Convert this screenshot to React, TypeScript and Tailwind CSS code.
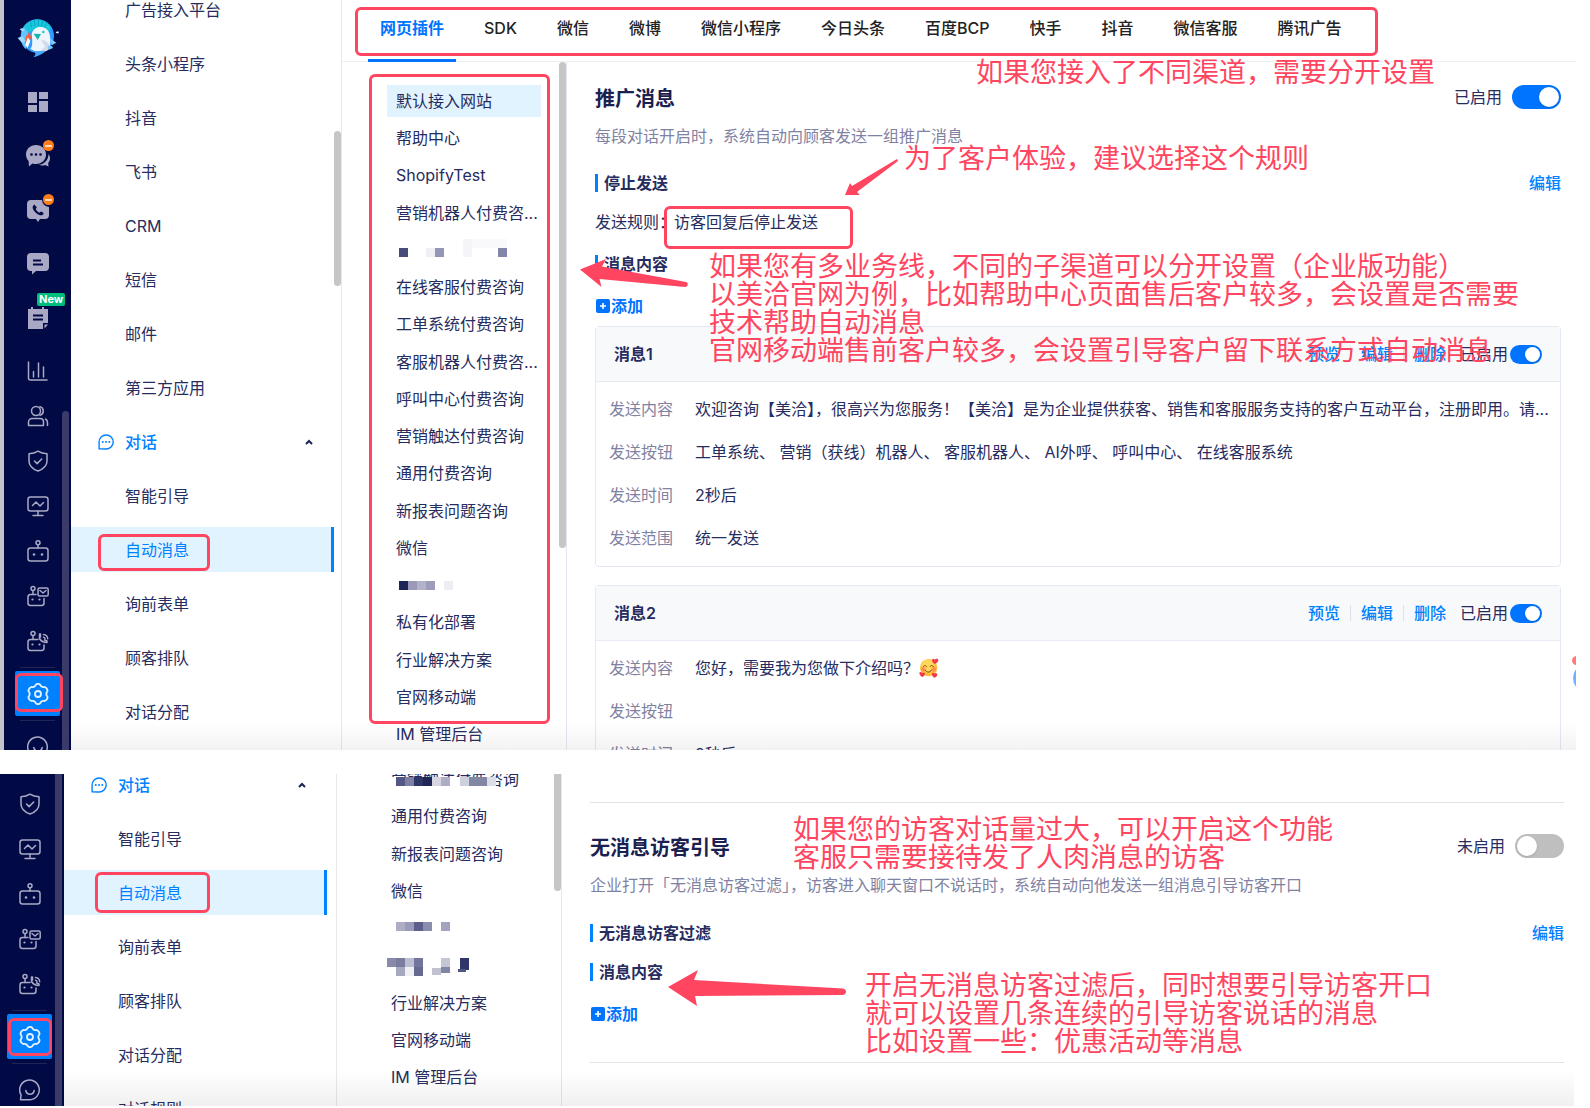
import type { ReactNode } from 'react';
import clsx from 'clsx';

type MenuItem = { label: string; active?: boolean; group?: boolean };
type Pixel = [x: number, y: number, w: number, h: number, fill: string];
type Channel = { label?: string; active?: boolean; mask?: Pixel[] };

const topMenu: MenuItem[] = [
  { label: '广告接入平台' },
  { label: '头条小程序' },
  { label: '抖音' },
  { label: '飞书' },
  { label: 'CRM' },
  { label: '短信' },
  { label: '邮件' },
  { label: '第三方应用' },
  { label: '对话', group: true },
  { label: '智能引导' },
  { label: '自动消息', active: true },
  { label: '询前表单' },
  { label: '顾客排队' },
  { label: '对话分配' },
];

const bottomMenu: MenuItem[] = [
  { label: '对话', group: true },
  { label: '智能引导' },
  { label: '自动消息', active: true },
  { label: '询前表单' },
  { label: '顾客排队' },
  { label: '对话分配' },
  { label: '对话规则' },
];

const tabs = [
  '网页插件',
  'SDK',
  '微信',
  '微博',
  '微信小程序',
  '今日头条',
  '百度BCP',
  '快手',
  '抖音',
  '微信客服',
  '腾讯广告',
];

const topChannels: Channel[] = [
  { label: '默认接入网站', active: true },
  { label: '帮助中心' },
  { label: 'ShopifyTest' },
  { label: '营销机器人付费咨...' },
  {
    mask: [
      [3, 7, 9, 9, '#474c7a'],
      [30, 7, 9, 9, '#efeff4'],
      [39, 7, 9, 9, '#9496b5'],
      [67, -2, 9, 18, '#f5f5f9'],
      [76, -2, 35, 9, '#f9f9fb'],
      [102, 7, 9, 9, '#8486a9'],
    ],
  },
  { label: '在线客服付费咨询' },
  { label: '工单系统付费咨询' },
  { label: '客服机器人付费咨...' },
  { label: '呼叫中心付费咨询' },
  { label: '营销触达付费咨询' },
  { label: '通用付费咨询' },
  { label: '新报表问题咨询' },
  { label: '微信' },
  {
    mask: [
      [3, 5, 9, 9, '#1e2455'],
      [12, 5, 9, 9, '#9a99b8'],
      [21, 5, 9, 9, '#b2b2c8'],
      [30, 5, 9, 9, '#9d9cbb'],
      [48, 5, 9, 9, '#ededf2'],
    ],
  },
  { label: '私有化部署' },
  { label: '行业解决方案' },
  { label: '官网移动端' },
  { label: 'IM 管理后台' },
];

const bottomChannels: Channel[] = [
  {
    label: '营销触达付费咨询',
    mask: [
      [-2, 7, 107, 11, '#ffffff'],
      [5, 7, 9, 9, '#525786'],
      [14, 7, 9, 9, '#7d80a3'],
      [23, 7, 9, 9, '#2f3668'],
      [32, 7, 9, 9, '#1f2656'],
      [41, 7, 9, 9, '#d5d6e0'],
      [50, 7, 9, 9, '#adaec6'],
      [69, 7, 9, 9, '#cfd0dd'],
      [78, 7, 18, 9, '#8287a3'],
      [96, 7, 9, 9, '#dcdde7'],
    ],
  },
  { label: '通用付费咨询' },
  { label: '新报表问题咨询' },
  { label: '微信' },
  {
    mask: [
      [5, 3, 9, 9, '#adaec5'],
      [14, 3, 9, 9, '#9a9bb8'],
      [23, 3, 9, 9, '#5b5f89'],
      [32, 3, 9, 9, '#8a8eae'],
      [50, 3, 9, 9, '#a2a3bd'],
    ],
  },
  {
    mask: [
      [-4, 2, 9, 9, '#878aa8'],
      [5, 2, 9, 9, '#7a7d9f'],
      [5, 11, 9, 9, '#a6a8bf'],
      [14, 2, 9, 9, '#bcbdd0'],
      [14, 11, 9, 9, '#f0f0f4'],
      [23, 2, 9, 9, '#73769a'],
      [23, 11, 9, 9, '#666a92'],
      [50, 2, 9, 9, '#c4c6d4'],
      [41, 12, 9, 7, '#bfc1d0'],
      [50, 11, 9, 6, '#8084a5'],
      [69, 2, 9, 12, '#303768'],
      [67, 13, 8, 3, '#50567f'],
    ],
  },
  { label: '行业解决方案' },
  { label: '官网移动端' },
  { label: 'IM 管理后台' },
];

const strokeProps = {
  fill: 'none',
  stroke: 'currentColor',
  strokeWidth: 1.5,
  strokeLinecap: 'round' as const,
  strokeLinejoin: 'round' as const,
};

function Icon({ children, size = 22 }: { children: ReactNode; size?: number }) {
  return (
    <svg width={size} height={size} viewBox="0 0 22 22" aria-hidden="true" {...strokeProps}>
      {children}
    </svg>
  );
}

function Logo() {
  return (
    <svg width="42" height="40" viewBox="0 0 126 120" aria-hidden="true">
      <circle cx="61" cy="54" r="50" fill="#2f9bff" />
      <path d="M20 26a50 50 0 0 1 82 0l-8 18-40-12-30 20z" fill="#17c9dc" />
      <path d="M40 10l4 18M52 5l2 20M65 4l-1 20M78 7l-5 18M90 13l-9 16" stroke="#0aa3c4" strokeWidth="3" />
      <path d="M12 60c0-18 4-26 10-32l12 18-8 48C18 86 12 74 12 60z" fill="#63c4ff" />
      <path
        d="M44 48c4-18 20-24 34-20 16 4 22 20 22 38 0 18-2 30-14 34-18 6-36 0-46-8 8-6 6-26 4-44z"
        fill="#eef5fc"
      />
      <path d="M72 66c12 0 24 8 26 20-4 10-16 16-28 14l14-14z" fill="#d3dcea" />
      <path d="M50 47l22 1-10 18z" fill="#12b8b0" />
      <circle cx="79" cy="42" r="4" fill="#35c6c0" />
      <path d="M38 40l4 20-10 18-8-4 2-16z" fill="#ff5a36" />
      <path d="M32 58l8 10-8 22-7-8z" fill="#fff" />
      <path d="M2 60l14-6 10 16-10 6zM8 34c4-4 12-4 14 0l-4 8z" fill="#9adcff" />
      <path d="M98 60l20 14-14 8zM92 84c8-4 14 0 16 6l-14 6z" fill="#7cc9ff" />
      <path d="M116 42l8-2 2 6h-8z" fill="#c5ecff" />
      <path d="M50 100l34-2c-4 10-18 14-34 20 6-8 8-12 0-18z" fill="#49a8ff" />
    </svg>
  );
}

const GridIcon = () => (
  <Icon>
    <path
      d="M1 1h9v11H1zM12 1h9v7h-9zM1 14h9v7H1zM12 10h9v11h-9z"
      fill="currentColor"
      stroke="none"
    />
  </Icon>
);

const ChatsIcon = () => (
  <svg width="26" height="24" viewBox="0 0 26 24" aria-hidden="true">
    <path
      d="M11 1c6 0 10 4.300 10 9.500S17 20 11 20c-1.500 0-2.600-.2-3.600-.6L4 22.500 3.600 17C2 15.400 1 13 1 10.500 1 5.300 5 1 11 1z"
      fill="currentColor"
    />
    <path d="M23.500 10c2.400 3.400 1.800 6.500-.3 9l.3 3.600-3.400-1.600c-2.300.9-4.700.6-6.300-.2 6-.6 9.700-5.300 9.700-10.800z" fill="currentColor" />
    <g fill="#020a45">
      <circle cx="6.500" cy="10.500" r="1.300" />
      <circle cx="11" cy="10.500" r="1.300" />
      <circle cx="15.500" cy="10.500" r="1.300" />
    </g>
  </svg>
);

const PhoneChatIcon = () => (
  <svg width="24" height="24" viewBox="0 0 24 24" aria-hidden="true">
    <path d="M5 2h11a8 8 0 0 0 7 7v8a4 4 0 0 1-4 4h-5l-2 3-2-3H5a4 4 0 0 1-4-4V6a4 4 0 0 1 4-4z" fill="currentColor" />
    <path
      d="M8.500 6.500c-2 1-2.500 3-1 5.500s4 4.500 6.500 5.200c2 .4 3.300-.4 3.700-2.200l-2.700-1.500-1.700 1.200c-1.500-.7-2.800-2-3.600-3.700l1.100-1.600z"
      fill="#020a45"
    />
  </svg>
);

const MessageIcon = () => (
  <svg width="24" height="24" viewBox="0 0 24 24" aria-hidden="true">
    <path d="M5 1h14a4 4 0 0 1 4 4v10a4 4 0 0 1-4 4h-9l-4 3.500V19H5a4 4 0 0 1-4-4V5a4 4 0 0 1 4-4z" fill="currentColor" />
    <path d="M7 8.500h8M7 12.500h10" stroke="#020a45" strokeWidth="1.800" />
  </svg>
);

const NoteIcon = () => (
  <svg width="22" height="24" viewBox="0 0 22 24" aria-hidden="true">
    <path d="M1 3h3V1h2v2h9V1h2v2h4v14h-5v6H1z" fill="currentColor" />
    <path d="M17.500 18.500H21l-3.500 4z" fill="currentColor" />
    <path d="M6 9.500h10M6 13.500h10" stroke="#020a45" strokeWidth="1.800" />
  </svg>
);

const ChartIcon = () => (
  <Icon>
    <path d="M1.500 2v16c0 1.500.6 2 2 2H20M6.500 11.500V17M11.500 3v14M16.500 7v10" />
  </Icon>
);

const UsersIcon = () => (
  <Icon>
    <circle cx="9" cy="6" r="4.500" />
    <path d="M13 1.600a4.600 4.600 0 0 1 0 8.800M1.500 20.500V17c0-2 1.600-3.500 3.500-3.500h8c2 0 3.500 1.500 3.500 3.500v3.500zM18.500 14c1.400.8 2 2 2 3.500v3" />
  </Icon>
);

const ShieldIcon = () => (
  <Icon>
    <path d="M11 1.200c2.600 1.700 5.500 2.500 9 2.600V11c0 4.800-3.500 8-9 10-5.500-2-9-5.200-9-10V3.800c3.500-.1 6.400-.9 9-2.600z" />
    <path d="M7.500 11l2.600 2.600L14.700 9" />
  </Icon>
);

const MonitorIcon = () => (
  <Icon>
    <rect x="1" y="2" width="20" height="14" rx="2.500" />
    <path d="M5.500 10.500L9 7l4 4 3.500-3.500M11 16v4M6 20.500h10" />
  </Icon>
);

const RobotIcon = () => (
  <Icon>
    <rect x="1" y="8" width="20" height="13" rx="2.500" />
    <circle cx="11" cy="2.800" r="2" />
    <path d="M11 5v3" />
    <g fill="currentColor" stroke="none">
      <circle cx="7" cy="14.500" r="1.300" />
      <circle cx="15" cy="14.500" r="1.300" />
    </g>
  </Icon>
);

const RobotMailIcon = () => (
  <Icon>
    <path d="M9 9.500H3.500C2 9.500 1 10.300 1 12v6c0 1.700 1 2.500 2.500 2.500h11c1.500 0 2.500-.8 2.500-2.500v-4.500" />
    <circle cx="6" cy="3.500" r="2" />
    <path d="M6 5.500v4" />
    <rect x="11" y="3" width="10.200" height="8" rx="1.500" />
    <path d="M13 5.500l3 2.500 3-2.500" />
    <g fill="currentColor" stroke="none">
      <circle cx="5.500" cy="14.500" r="1.100" />
      <circle cx="12.500" cy="14.500" r="1.100" />
    </g>
  </Icon>
);

const RobotCallIcon = () => (
  <Icon>
    <path d="M11 9.500H3.500C2 9.500 1 10.300 1 12v6c0 1.700 1 2.500 2.500 2.500h11c1.500 0 2.500-.8 2.500-2.500v-3" />
    <circle cx="6" cy="3.500" r="2" />
    <path d="M6 5.500v4" />
    <path d="M12.500 4v4.500c1.500 2.500 4 4 7.500 4v-1.500l-2.500-1M12.500 4h1v3M16.500 4.500c2.500.2 4 1.700 4.200 4.200M16.500 7.200c.9.1 1.400.6 1.500 1.500" />
    <g fill="currentColor" stroke="none">
      <circle cx="5.500" cy="14.500" r="1.100" />
      <circle cx="12.500" cy="14.500" r="1.100" />
    </g>
  </Icon>
);

const GearIcon = () => (
  <Icon>
    <path
      d="M8.800 1.800Q11 0 13.200 1.800Q14.300 4.700 17.600 4Q20.400 5 20.600 8Q18 11 20.600 14Q20.400 17 17.600 18Q14.300 17.300 13.200 20.200Q11 22 8.800 20.200Q7.700 17.300 4.400 18Q1.600 17 1.400 14Q4 11 1.400 8Q1.600 5 4.400 4Q7.700 4.700 8.800 1.800z"
      strokeWidth="1.800"
    />
    <circle cx="11" cy="11" r="3" strokeWidth="1.800" />
  </Icon>
);

const SmileIcon = () => (
  <Icon>
    <path d="M1.500 20.500l.6-4.500A9.800 9.800 0 1 1 11 20.700H1.500z" />
    <path d="M6.800 11.500c1 5 7.400 5 8.400 0" />
  </Icon>
);

function NavItem({ label, active, children }: { label: string; active?: boolean; children: ReactNode }) {
  return (
    <a
      href="#"
      aria-label={label}
      className={clsx(
        'flex h-[45px] shrink-0 items-center justify-center rounded-xs',
        active ? 'bg-[#0081ff] text-[#e4f1ff]' : 'text-[#a9a9c5]'
      )}
    >
      {children}
    </a>
  );
}

function TopNavItem({ label, badge, children }: { label: string; badge?: ReactNode; children: ReactNode }) {
  return (
    <a
      href="#"
      aria-label={label}
      className="relative flex h-[54px] shrink-0 items-center justify-center text-[#a9a9c5]"
    >
      {children}
      {badge}
    </a>
  );
}

function BusyBadge() {
  return (
    <span className="absolute top-[11px] left-7 flex size-[11px] items-center justify-center rounded-full bg-[#ff7d1a]">
      <span className="h-[2px] w-[7px] bg-[#ffd9bd]" />
    </span>
  );
}

function NavDivider() {
  return (
    <div className="flex h-2 shrink-0 items-center px-[5px]">
      <div className="h-px w-full bg-[#1f2657]" />
    </div>
  );
}

// lower part of the icon rail, the same on both panels
function NavTail() {
  return (
    <>
      <NavItem label="质检">
        <ShieldIcon />
      </NavItem>
      <NavItem label="监控">
        <MonitorIcon />
      </NavItem>
      <NavItem label="机器人">
        <RobotIcon />
      </NavItem>
      <NavItem label="营销机器人">
        <RobotMailIcon />
      </NavItem>
      <NavItem label="外呼机器人">
        <RobotCallIcon />
      </NavItem>
      <NavDivider />
      <NavItem label="设置" active>
        <GearIcon />
      </NavItem>
      <NavDivider />
      <NavItem label="反馈">
        <SmileIcon />
      </NavItem>
    </>
  );
}

function SideMenu({
  items,
  className,
  listClassName,
  thumb,
}: {
  items: MenuItem[];
  className: string;
  listClassName?: string;
  thumb?: ReactNode;
}) {
  return (
    <aside className={clsx('flex shrink-0 border-r border-[#e8e8ec]', className)}>
      <ul className={clsx('flex w-[263px] shrink-0 flex-col gap-[9px]', listClassName)}>
        {items.map((item) => (
          <li key={item.label}>
            <a
              href="#"
              className={clsx(
                'flex h-[45px] items-center',
                item.group ? 'gap-[11px] pr-[21px] pl-[27px] font-medium text-[#0081ff]' : 'pl-[54px]',
                item.active && 'border-r-[3px] border-[#0081ff] bg-[#e1f3ff] text-[#0081ff]'
              )}
            >
              {item.group && (
                <Icon size={16}>
                  <path d="M1.500 20.500V11A9.700 9.700 0 1 1 11 20.700z" strokeWidth="1.900" />
                  <path d="M6.500 11h.1M11 11h.1M15.500 11h.1" strokeWidth="2.600" />
                </Icon>
              )}
              {item.label}
              {item.group && (
                <svg width="8" height="6" viewBox="0 0 8 6" className="ml-auto text-[#1c2452]" aria-hidden="true">
                  <path d="M1 5l3-3 3 3" fill="none" stroke="currentColor" strokeWidth="2" />
                </svg>
              )}
            </a>
          </li>
        ))}
      </ul>
      {thumb}
    </aside>
  );
}

function Mosaic({ pixels, overlay }: { pixels: Pixel[]; overlay?: boolean }) {
  return (
    <svg
      width="136"
      height="18"
      viewBox="0 0 136 18"
      className={clsx('overflow-visible', overlay && 'absolute top-[7px] left-[9px]')}
      aria-hidden="true"
    >
      {pixels.map(([x, y, w, h, fill]) => (
        <rect key={`${x}-${y}`} x={x} y={y} width={w} height={h} fill={fill} />
      ))}
    </svg>
  );
}

function ChannelList({ items, className, thumb }: { items: Channel[]; className?: string; thumb: ReactNode }) {
  return (
    <div className="flex w-[225px] shrink-0 justify-between border-r border-[#e3e8f0] pl-[45px]">
      <ul className={clsx('flex w-[154px] flex-col justify-between', className)}>
        {items.map((item, i) => (
          <li key={i}>
            <a
              href="#"
              className={clsx(
                'relative flex h-8 items-center px-[9px] whitespace-nowrap',
                item.active && 'bg-[#e1f3ff]'
              )}
            >
              {item.label}
              {item.mask && <Mosaic pixels={item.mask} overlay={!!item.label} />}
            </a>
          </li>
        ))}
      </ul>
      {thumb}
    </div>
  );
}

function Switch({ label, on, small }: { label: string; on?: boolean; small?: boolean }) {
  return (
    <label className={clsx('flex items-center', small ? 'gap-[2px]' : 'gap-[10px]')}>
      {label}
      <input
        type="checkbox"
        role="switch"
        defaultChecked={on}
        className={clsx(
          'flex shrink-0 appearance-none items-center rounded-full bg-[#bfbfbf] px-[2px] before:rounded-full before:bg-white before:shadow checked:justify-end checked:bg-[#0073ff]',
          small ? 'h-[19px] w-8 before:size-[15px]' : 'h-6 w-[49px] before:size-5'
        )}
      />
    </label>
  );
}

function TitleRow({ title, label, on }: { title: string; label: string; on?: boolean }) {
  return (
    <div className="flex h-6 items-start justify-between">
      <h2 className="text-xl font-semibold text-[#1a2150]">{title}</h2>
      <Switch label={label} on={on} />
    </div>
  );
}

function SectionHeader({ title, editable, className }: { title: string; editable?: boolean; className?: string }) {
  return (
    <div className={clsx('flex items-center justify-between', className)}>
      <h3 className="flex items-center gap-[6px] font-semibold">
        <span className="h-[18px] w-[3px] bg-[#0081ff]" />
        {title}
      </h3>
      {editable && (
        <a href="#" className="font-medium text-[#0081ff]">
          编辑
        </a>
      )}
    </div>
  );
}

function AddButton({ className }: { className?: string }) {
  return (
    <button type="button" className={clsx('flex items-center gap-px pl-px font-semibold text-[#0073ff]', className)}>
      <svg width="14" height="14" viewBox="0 0 14 14" aria-hidden="true">
        <rect width="14" height="14" rx="2" fill="currentColor" />
        <path d="M7 4v6M4 7h6" stroke="#fff" strokeWidth="1.600" />
      </svg>
      添加
    </button>
  );
}

function LoveEmoji() {
  return (
    <svg width="20" height="20" viewBox="0 0 60 60" role="img" aria-label="🥰" className="inline-block">
      <circle cx="29" cy="29" r="26" fill="#fdc03a" />
      <circle cx="27" cy="24" r="19" fill="#ffd75a" />
      <circle cx="13" cy="34" r="7" fill="#ff8f4a" />
      <circle cx="44" cy="34" r="7" fill="#ff8f4a" />
      <path d="M13 26c3-5 8-5 10 0M33 26c3-5 8-5 10 0M19 37c4 7 14 7 18 0" fill="none" stroke="#7a4410" strokeWidth="3" strokeLinecap="round" />
      <path d="M47 18c-9-6-10-15-4-16 3 0 4 2 4 4 2-3 5-5 9-3 5 4 0 12-9 15z" fill="#f2394b" />
      <path d="M9 57C0 51-1 43 4 42c3 0 4 2 5 4 1-3 5-4 8-1 3 4-1 9-8 12z" fill="#f2394b" />
      <path d="M46 59c-8-6-9-14-4-15 3 0 4 2 4 4 2-3 5-4 8-1 3 4-1 9-8 12z" fill="#f2394b" />
    </svg>
  );
}

function MessageCard({
  title,
  rows,
  className,
}: {
  title: string;
  rows: { label: string; value?: ReactNode }[];
  className?: string;
}) {
  return (
    <section className={clsx('rounded-sm border border-[#e3e8f3] bg-white', className)}>
      <header className="flex h-[55px] items-center justify-between border-b border-[#e8ebf5] bg-[#f8f9fb] pr-[18px] pl-[18px]">
        <h4 className="font-semibold">{title}</h4>
        <div className="flex items-center">
          <div className="flex items-center gap-[10px] pr-[14px] font-medium text-[#0081ff]">
            <a href="#">预览</a>
            <span className="h-4 w-px bg-[#dfe2ec]" />
            <a href="#">编辑</a>
            <span className="h-4 w-px bg-[#dfe2ec]" />
            <a href="#">删除</a>
          </div>
          <Switch label="已启用" on small />
        </div>
      </header>
      <dl className="flex flex-col gap-[19px] px-[13px] pt-[15px] pb-4">
        {rows.map((row) => (
          <div key={row.label} className="flex h-6">
            <dt className="w-[86px] shrink-0 text-[#7f82a2]">{row.label}</dt>
            <dd className="flex items-center whitespace-nowrap">{row.value}</dd>
          </div>
        ))}
      </dl>
    </section>
  );
}

// red hand-drawn frame laid over the screen
function Mark({ className }: { className: string }) {
  return <div className={clsx('pointer-events-none absolute rounded-md border-[3px] border-[#ff4560]', className)} />;
}

function Note({ className, children }: { className: string; children: ReactNode }) {
  return (
    <p
      className={clsx(
        'pointer-events-none absolute text-[27px] leading-7 font-normal whitespace-nowrap text-[#ff4560]',
        className
      )}
    >
      {children}
    </p>
  );
}

function TopPanel() {
  return (
    <div className="relative mr-[14px] flex min-h-0 overflow-hidden">
      <nav className="flex w-[71px] shrink-0 justify-between border-l-[4px] border-[#c4c4c8] bg-[#020a45] pr-[2px] pl-[11px]">
        <div className="flex w-[45px] flex-col">
          <a href="#" aria-label="美洽" className="flex h-[75px] shrink-0 items-center justify-center">
            <Logo />
          </a>
          <TopNavItem label="工作台">
            <GridIcon />
          </TopNavItem>
          <TopNavItem label="在线对话" badge={<BusyBadge />}>
            <ChatsIcon />
          </TopNavItem>
          <TopNavItem label="通话" badge={<BusyBadge />}>
            <PhoneChatIcon />
          </TopNavItem>
          <TopNavItem label="留言">
            <MessageIcon />
          </TopNavItem>
          <TopNavItem
            label="工单"
            badge={
              <span className="absolute top-[2px] left-[22px] rounded-xs bg-[#00bd7e] px-[2px] text-[11px] leading-[13px] font-bold text-white">
                New
              </span>
            }
          >
            <NoteIcon />
          </TopNavItem>
          <div className="mt-[3px] flex flex-col">
            <NavItem label="报表">
              <ChartIcon />
            </NavItem>
            <NavItem label="顾客">
              <UsersIcon />
            </NavItem>
            <NavTail />
          </div>
        </div>
        <div className="mt-[411px] w-[7px] rounded-t-full bg-[#3a3b6b]" />
      </nav>

      <SideMenu
        items={topMenu}
        className="w-[271px]"
        listClassName="-mt-[13px]"
        thumb={<div className="mt-[131px] h-[155px] w-[7px] shrink-0 rounded-full bg-[#c6c6c6]" />}
      />

      <div className="flex min-w-0 flex-1 flex-col">
        <div role="tablist" className="flex h-[62px] shrink-0 gap-4 border-b border-[#eeeff3] pl-[26px]">
          {tabs.map((tab, i) => (
            <button
              key={tab}
              type="button"
              role="tab"
              aria-selected={i === 0}
              className={clsx(
                'h-[62px] shrink-0 border-b-[3px] px-3 pb-1',
                i === 0
                  ? 'border-[#0073ff] font-bold text-[#0073ff]'
                  : 'border-transparent font-medium text-[#222]'
              )}
            >
              {tab}
            </button>
          ))}
        </div>

        <div className="flex min-h-0 flex-1">
          <ChannelList
            items={topChannels}
            className="pt-[23px]"
            thumb={<div className="h-[486px] w-[7px] rounded-full bg-[#c6c6c6]" />}
          />
          <main className="min-w-0 flex-1 pt-[23px] pr-[15px] pl-7">
            <TitleRow title="推广消息" label="已启用" on />
            <p className="mt-[15px] text-[#7f82a2]">每段对话开启时，系统自动向顾客发送一组推广消息</p>
            <SectionHeader title="停止发送" editable className="mt-[23px]" />
            <p className="mt-[15px] flex">
              <span className="w-[79px] whitespace-nowrap">发送规则：</span>
              <span>访客回复后停止发送</span>
            </p>
            <SectionHeader title="消息内容" className="mt-[18px]" />
            <AddButton className="mt-[18px]" />
            <MessageCard
              title="消息1"
              className="mt-2"
              rows={[
                {
                  label: '发送内容',
                  value:
                    '欢迎咨询【美洽】，很高兴为您服务！【美洽】是为企业提供获客、销售和客服服务支持的客户互动平台，注册即用。请...',
                },
                {
                  label: '发送按钮',
                  value: '工单系统、 营销（获线）机器人、 客服机器人、 AI外呼、 呼叫中心、 在线客服系统',
                },
                { label: '发送时间', value: '2秒后' },
                { label: '发送范围', value: '统一发送' },
              ]}
            />
            <MessageCard
              title="消息2"
              className="mt-[18px]"
              rows={[
                {
                  label: '发送内容',
                  value: (
                    <>
                      您好，需要我为您做下介绍吗？
                      <LoveEmoji />
                    </>
                  ),
                },
                { label: '发送按钮' },
                { label: '发送时间', value: '2秒后' },
              ]}
            />
          </main>
        </div>
      </div>

      {/* floating chat widget, cut off by the window edge */}
      <div className="absolute top-[656px] -right-[5px] size-[9px] rounded-full bg-[#ff7b7b]" />
      <div className="absolute top-[664px] -right-[25px] size-[28px] rounded-full bg-[#6db3ff]" />

      <div className="pointer-events-none absolute right-0 bottom-0 left-[71px] h-7 bg-linear-to-t from-black/5 to-transparent" />

      <Mark className="top-[7px] left-[355px] h-[49px] w-[1023px]" />
      <Mark className="top-[74px] left-[369px] h-[650px] w-[181px]" />
      <Mark className="top-[206px] left-[664px] h-[43px] w-[189px]" />
      <Mark className="top-[534px] left-[98px] h-[37px] w-[112px]" />
      <Mark className="top-[673px] left-[15px] h-[39px] w-[48px]" />

      <Note className="top-[59px] left-[976px]">如果您接入了不同渠道，需要分开设置</Note>
      <Note className="top-[145px] left-[904px]">为了客户体验，建议选择这个规则</Note>
      <Note className="top-[253px] left-[709px]">
        如果您有多业务线，不同的子渠道可以分开设置（企业版功能）
        <br />
        以美洽官网为例，比如帮助中心页面售后客户较多，会设置是否需要
        <br />
        技术帮助自动消息
        <br />
        官网移动端售前客户较多，会设置引导客户留下联系方式自动消息
      </Note>

      <svg width="54" height="38" viewBox="0 0 54 38" className="absolute top-[158px] left-[845px]" aria-hidden="true">
        <path d="M0 37l5-12 2 3L52 1l1 2-41 31 3 3z" fill="#ff4560" />
      </svg>
      <svg width="110" height="30" viewBox="0 0 110 30" className="absolute top-[258px] left-[579px]" aria-hidden="true">
        <path d="M1 11.500L27 1l-4 7.500 84 15.500c3 1 2 5-1 5L20.500 21l2 8z" fill="#ff4560" />
      </svg>
    </div>
  );
}

function BottomPanel() {
  return (
    <div className="relative mr-4 flex min-h-0 overflow-hidden">
      <nav className="flex w-16 shrink-0 justify-between bg-[#020a45] pr-[2px] pl-[7px]">
        <div className="flex w-[45px] flex-col pt-[7px]">
          <NavTail />
        </div>
        <div className="w-[7px] bg-[#3a3b6b]" />
      </nav>

      <SideMenu items={bottomMenu} className="w-[273px]" listClassName="-mt-[12px]" />

      <div className="flex min-w-0 flex-1">
        <ChannelList
          items={bottomChannels}
          className="-mt-[11px] pb-[13px]"
          thumb={<div className="h-[117px] w-[7px] rounded-b-full bg-[#c6c6c6]" />}
        />
        <main className="min-w-0 flex-1 pt-7 pr-[10px] pl-7">
          <hr className="mb-[31px] border-[#e3e3e6]" />
          <TitleRow title="无消息访客引导" label="未启用" />
          <p className="mt-[15px] text-[#7f82a2]">
            企业打开「无消息访客过滤」，访客进入聊天窗口不说话时，系统自动向他发送一组消息引导访客开口
          </p>
          <SectionHeader title="无消息访客过滤" editable className="mt-6" />
          <SectionHeader title="消息内容" className="mt-[15px]" />
          <AddButton className="mt-[18px]" />
          <hr className="mt-9 border-[#e3e3e6]" />
        </main>
      </div>

      <div className="pointer-events-none absolute right-0 bottom-0 left-16 h-9 bg-linear-to-t from-black/6 to-transparent" />

      <Mark className="top-[98px] left-[95px] h-[41px] w-[115px]" />
      <Mark className="top-[244px] left-[8px] h-[38px] w-[44px]" />

      <Note className="top-[42px] left-[793px]">
        如果您的访客对话量过大，可以开启这个功能
        <br />
        客服只需要接待发了人肉消息的访客
      </Note>
      <Note className="top-[198px] left-[865px]">
        开启无消息访客过滤后，同时想要引导访客开口
        <br />
        就可以设置几条连续的引导访客说话的消息
        <br />
        比如设置一些：优惠活动等消息
      </Note>

      <svg width="180" height="38" viewBox="0 0 180 38" className="absolute top-[195px] left-[667px]" aria-hidden="true">
        <path d="M1 18L31 1l-4 10 149 8.500c4 .5 4 6 0 6.500L28 27l2 10z" fill="#ff4560" />
      </svg>
    </div>
  );
}

export default function App() {
  return (
    <div className="grid h-screen grid-rows-[minmax(0,750fr)_minmax(0,332fr)] gap-6 overflow-hidden bg-white pb-[2px] font-[Inter,'Noto_Sans_CJK_SC',sans-serif] text-base text-[#262c5e]">
      <TopPanel />
      <BottomPanel />
    </div>
  );
}
